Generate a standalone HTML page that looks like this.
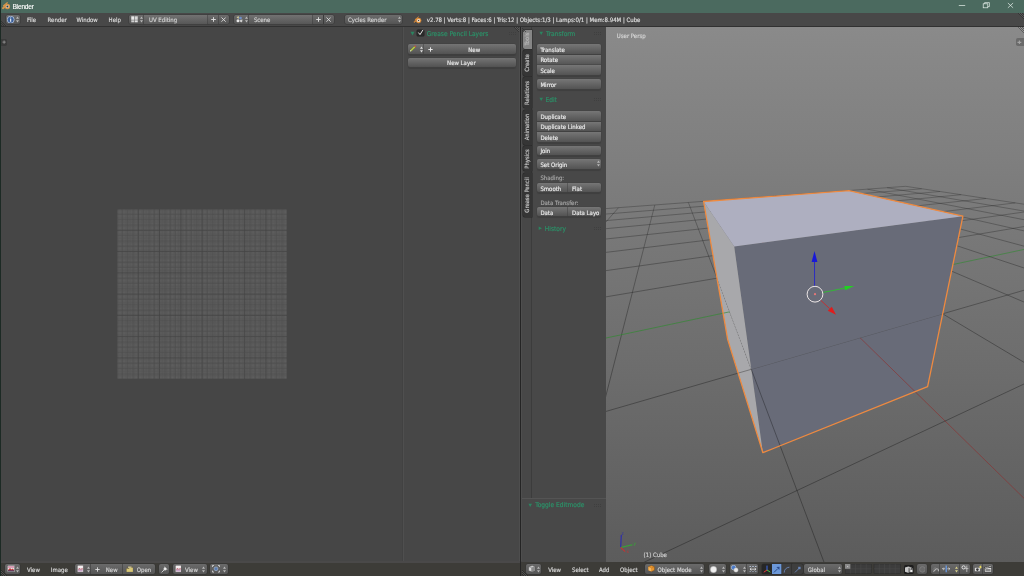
<!DOCTYPE html>
<html><head><meta charset="utf-8"><title>Blender</title>
<style>
html,body{margin:0;padding:0}
body{width:1024px;height:576px;overflow:hidden;position:relative;background:#464646;font-family:"DejaVu Sans Condensed","DejaVu Sans","Liberation Sans",sans-serif;font-stretch:condensed;font-size:6px;color:#d8d8d8;line-height:1;-webkit-text-stroke:0.18px}
.a{position:absolute}
.t{position:absolute;white-space:nowrap;line-height:7px;height:7px}
#title{left:0;top:0;width:1024px;height:13px;background:#4b6a5f}
#info{left:0;top:13px;width:1024px;height:13px;background:#484848}
.hb{position:absolute;top:15px;height:9px;background:linear-gradient(#5e5e5e,#4b4b4b);box-shadow:0 0 0 0.5px #333}
.bb{position:absolute;top:564px;height:9.5px;background:linear-gradient(#5e5e5e,#4b4b4b);box-shadow:0 0 0 0.5px #2e2e2e}
.pb{position:absolute;height:9.5px;background:linear-gradient(#6c6c6c,#515151);box-shadow:0 0 0 0.5px #333,0 1px 1px rgba(0,0,0,.25);color:#e6e6e6}
.pb .t{top:1.4px}
.ph{color:#2a9a6c}
.tab{position:absolute;left:2px;width:9px;background:#343434;border-radius:2px 0 0 2px;box-shadow:0 0 0 0.5px #222}
.tab span{position:absolute;left:50%;top:50%;transform:translate(-50%,-50%) rotate(-90deg);white-space:nowrap;color:#c8c8c8;font-size:5.4px}
</style></head><body><div id="root" style="position:absolute;left:0;top:0;width:1024px;height:576px;will-change:transform">

<!-- window title bar -->
<div id="title" class="a">
 <svg class="a" style="left:1.6px;top:1.8px" width="9" height="8" viewBox="0 0 18 16"><path d="M10.5 1.4 L3 7.4 H6.2 L1.4 11.6 C0.6 12.4 1.6 13.6 2.6 12.9 L5.4 10.8" fill="none" stroke="#d8954a" stroke-width="2.2" stroke-linecap="round" stroke-linejoin="round"/><circle cx="10.8" cy="9" r="5.4" fill="#d8954a"/><circle cx="10.8" cy="9" r="3" fill="#eadfcc"/><circle cx="10.8" cy="9" r="2" fill="#2c3a4c"/></svg>
 <div class="t" style="left:12.4px;top:2.7px;-webkit-text-stroke:0.12px;letter-spacing:-0.18px;font-family:'Liberation Sans',sans-serif;font-stretch:normal;font-size:6.6px;color:#fff">Blender</div>
 <svg class="a" style="left:950px;top:0" width="74" height="13" viewBox="0 0 74 13" fill="none" stroke="#e8f0ec" stroke-width="0.7"><path d="M8.8 5.5H15.2"/><rect x="33.2" y="3.8" width="4.6" height="4"/><path d="M34.6 3.8V2.6H39.4V6.6H37.8"/><path d="M57.9 3L63.1 7.8M63.1 3L57.9 7.8"/></svg>
</div>

<!-- info header -->
<div id="info" class="a"></div>
<div class="a" style="left:0;top:26px;width:1024px;height:1px;background:#313131"></div>

<div class="a" style="left:5.8px;top:14.8px;width:13.8px;height:9px;background:linear-gradient(#6c6c6c,#545454);box-shadow:0 0 0 0.5px #383838;border-radius:2px"></div>
<svg class="a" style="left:7.4px;top:15.6px" width="7.4" height="7.4" viewBox="0 0 7.4 7.4"><circle cx="3.7" cy="3.7" r="3.5" fill="#3a5f9a" stroke="#c8d4e8" stroke-width="0.7"/><rect x="3.2" y="3" width="1" height="2.8" fill="#fff"/><rect x="3.2" y="1.5" width="1" height="1" fill="#fff"/></svg>
<svg class="a" style="left:15.8px;top:15.6px" width="3" height="7" viewBox="0 0 3 7"><path d="M0 2.8L1.5 0.6L3 2.8ZM0 4.2L1.5 6.4L3 4.2Z" fill="#b8b8b8"/></svg>
<div class="t" style="left:27.1px;top:15.6px;color:#d6d6d6">File</div>
<div class="t" style="left:47.6px;top:15.6px;color:#d6d6d6">Render</div>
<div class="t" style="left:76.5px;top:15.6px;color:#d6d6d6">Window</div>
<div class="t" style="left:108.6px;top:15.6px;color:#d6d6d6">Help</div>
<div class="a" style="left:129.4px;top:14.8px;width:15px;height:9px;background:linear-gradient(#6c6c6c,#545454);box-shadow:0 0 0 0.5px #383838;border-radius:2px 0 0 2px"></div>
<svg class="a" style="left:131px;top:16px" width="7" height="6.6" viewBox="0 0 14 13"><rect x="0.5" y="0.5" width="6" height="7" fill="#e8e8e8"/><rect x="7.5" y="0.5" width="6" height="7" fill="#d8d8d8"/><rect x="0.5" y="8.5" width="6" height="4" fill="#cfcfcf"/><rect x="7.5" y="8.5" width="6" height="4" fill="#e0e0e0"/></svg>
<svg class="a" style="left:139.7px;top:15.6px" width="3" height="7" viewBox="0 0 3 7"><path d="M0 2.8L1.5 0.6L3 2.8ZM0 4.2L1.5 6.4L3 4.2Z" fill="#b8b8b8"/></svg>
<div class="a" style="left:144.4px;top:14.8px;width:63.6px;height:9px;background:linear-gradient(#727272,#575757);box-shadow:0 0 0 0.5px #383838;"></div>
<div class="t" style="left:149px;top:15.6px;color:#cfcfcf">UV Editing</div>
<div class="a" style="left:208px;top:14.8px;width:10.6px;height:9px;background:linear-gradient(#6c6c6c,#545454);box-shadow:0 0 0 0.5px #383838;"></div>
<svg class="a" style="left:210.8px;top:16.8px" width="5" height="5" viewBox="0 0 5 5"><path d="M2.5 0.2V4.8M0.2 2.5H4.8" stroke="#dcdcdc" stroke-width="0.95" fill="none"/></svg>
<div class="a" style="left:218.6px;top:14.8px;width:10.8px;height:9px;background:linear-gradient(#6c6c6c,#545454);box-shadow:0 0 0 0.5px #383838;border-radius:0 2px 2px 0"></div>
<svg class="a" style="left:221.3px;top:16.7px" width="5.2" height="5.2" viewBox="0 0 5.2 5.2"><path d="M0.5 0.5L4.7 4.7M4.7 0.5L0.5 4.7" stroke="#dcdcdc" stroke-width="0.9" fill="none"/></svg>
<div class="a" style="left:234.3px;top:14.8px;width:15px;height:9px;background:linear-gradient(#6c6c6c,#545454);box-shadow:0 0 0 0.5px #383838;border-radius:2px 0 0 2px"></div>
<svg class="a" style="left:235.9px;top:16px" width="7" height="6.6" viewBox="0 0 14 13"><circle cx="4" cy="9.5" r="3" fill="#e8e8e8"/><circle cx="9" cy="4" r="2.8" fill="#6f8fc8"/><path d="M1 2L6 0.5L5 6Z" fill="#d8d0a0"/><path d="M8 8L13 7L12 12.5L8.5 12Z" fill="#cfcfcf"/></svg>
<svg class="a" style="left:244.6px;top:15.6px" width="3" height="7" viewBox="0 0 3 7"><path d="M0 2.8L1.5 0.6L3 2.8ZM0 4.2L1.5 6.4L3 4.2Z" fill="#b8b8b8"/></svg>
<div class="a" style="left:249.3px;top:14.8px;width:63.6px;height:9px;background:linear-gradient(#727272,#575757);box-shadow:0 0 0 0.5px #383838;"></div>
<div class="t" style="left:253.9px;top:15.6px;color:#cfcfcf">Scene</div>
<div class="a" style="left:312.9px;top:14.8px;width:10.6px;height:9px;background:linear-gradient(#6c6c6c,#545454);box-shadow:0 0 0 0.5px #383838;"></div>
<svg class="a" style="left:315.7px;top:16.8px" width="5" height="5" viewBox="0 0 5 5"><path d="M2.5 0.2V4.8M0.2 2.5H4.8" stroke="#dcdcdc" stroke-width="0.95" fill="none"/></svg>
<div class="a" style="left:323.5px;top:14.8px;width:10.8px;height:9px;background:linear-gradient(#6c6c6c,#545454);box-shadow:0 0 0 0.5px #383838;border-radius:0 2px 2px 0"></div>
<svg class="a" style="left:326.2px;top:16.7px" width="5.2" height="5.2" viewBox="0 0 5.2 5.2"><path d="M0.5 0.5L4.7 4.7M4.7 0.5L0.5 4.7" stroke="#dcdcdc" stroke-width="0.9" fill="none"/></svg>
<div class="a" style="left:345px;top:14.8px;width:57.2px;height:9px;background:linear-gradient(#6c6c6c,#545454);box-shadow:0 0 0 0.5px #383838;border-radius:2px"></div>
<div class="t" style="left:348px;top:15.6px;color:#cfcfcf">Cycles Render</div>
<svg class="a" style="left:398.1px;top:15.6px" width="3" height="7" viewBox="0 0 3 7"><path d="M0 2.8L1.5 0.6L3 2.8ZM0 4.2L1.5 6.4L3 4.2Z" fill="#b8b8b8"/></svg>
<svg class="a" style="left:412.6px;top:15.6px" width="9.4" height="8" viewBox="0 0 19 16"><path d="M11 1.6L4 7.2H6.8L2 11.4C1.2 12.2 2.2 13.2 3 12.6L5.6 10.6" fill="none" stroke="#e8923a" stroke-width="1.5" stroke-linecap="round" stroke-linejoin="round"/><circle cx="11.3" cy="9" r="4.9" fill="#e8923a" stroke="#e8923a" stroke-width="1.2"/><circle cx="11.3" cy="9" r="3.1" fill="#f6f0e6"/><circle cx="11.3" cy="9" r="1.5" fill="#4a4238"/></svg>
<div class="t" style="left:426.8px;top:15.6px;color:#dcdcdc">v2.78 | Verts:8 | Faces:6 | Tris:12 | Objects:1/3 | Lamps:0/1 | Mem:8.94M | Cube</div>
<svg class="a" style="left:1017px;top:13px" width="7" height="7" viewBox="0 0 7 7"><path d="M1 0L7 6M3 0L7 4M5 0L7 2" stroke="#2e2e2e" stroke-width="0.7" fill="none"/><path d="M2 0L7 5M4 0L7 3" stroke="#666" stroke-width="0.5" fill="none"/></svg>
<svg class="a" style="left:1px;top:20px" width="6" height="6" viewBox="0 0 6 6"><path d="M0 1L5 6M0 3L3 6M0 5L1 6" stroke="#2e2e2e" stroke-width="0.7" fill="none"/></svg>

<!-- UV editor -->
<div id="uv" class="a" style="left:0;top:27px;width:403px;height:536px;background:#464646"></div>
<svg class="a" style="left:116.8px;top:208.6px" width="170.2" height="170.2" viewBox="0 0 170.2 170.2"><defs><pattern id="fine" width="1.3297" height="1.3297" patternUnits="userSpaceOnUse"><rect width="1.3297" height="1.3297" fill="#5e5e5e"/><path d="M0 0.22H1.3297M0.22 0V1.3297" stroke="#535353" stroke-width="0.45"/></pattern></defs><rect x="0" y="0" width="170.2" height="170.2" fill="url(#fine)"/><path d="M0 0V170.2M0 0H170.2" stroke="#434343" stroke-width="0.7" fill="none"/><path d="M5.32 0V170.2M0 5.32H170.2" stroke="#4c4c4c" stroke-width="0.5" fill="none"/><path d="M10.64 0V170.2M0 10.64H170.2" stroke="#4c4c4c" stroke-width="0.5" fill="none"/><path d="M15.96 0V170.2M0 15.96H170.2" stroke="#4c4c4c" stroke-width="0.5" fill="none"/><path d="M21.27 0V170.2M0 21.27H170.2" stroke="#434343" stroke-width="0.7" fill="none"/><path d="M26.59 0V170.2M0 26.59H170.2" stroke="#4c4c4c" stroke-width="0.5" fill="none"/><path d="M31.91 0V170.2M0 31.91H170.2" stroke="#4c4c4c" stroke-width="0.5" fill="none"/><path d="M37.23 0V170.2M0 37.23H170.2" stroke="#4c4c4c" stroke-width="0.5" fill="none"/><path d="M42.55 0V170.2M0 42.55H170.2" stroke="#434343" stroke-width="0.7" fill="none"/><path d="M47.87 0V170.2M0 47.87H170.2" stroke="#4c4c4c" stroke-width="0.5" fill="none"/><path d="M53.19 0V170.2M0 53.19H170.2" stroke="#4c4c4c" stroke-width="0.5" fill="none"/><path d="M58.51 0V170.2M0 58.51H170.2" stroke="#4c4c4c" stroke-width="0.5" fill="none"/><path d="M63.82 0V170.2M0 63.82H170.2" stroke="#434343" stroke-width="0.7" fill="none"/><path d="M69.14 0V170.2M0 69.14H170.2" stroke="#4c4c4c" stroke-width="0.5" fill="none"/><path d="M74.46 0V170.2M0 74.46H170.2" stroke="#4c4c4c" stroke-width="0.5" fill="none"/><path d="M79.78 0V170.2M0 79.78H170.2" stroke="#4c4c4c" stroke-width="0.5" fill="none"/><path d="M85.1 0V170.2M0 85.1H170.2" stroke="#434343" stroke-width="0.7" fill="none"/><path d="M90.42 0V170.2M0 90.42H170.2" stroke="#4c4c4c" stroke-width="0.5" fill="none"/><path d="M95.74 0V170.2M0 95.74H170.2" stroke="#4c4c4c" stroke-width="0.5" fill="none"/><path d="M101.06 0V170.2M0 101.06H170.2" stroke="#4c4c4c" stroke-width="0.5" fill="none"/><path d="M106.38 0V170.2M0 106.38H170.2" stroke="#434343" stroke-width="0.7" fill="none"/><path d="M111.69 0V170.2M0 111.69H170.2" stroke="#4c4c4c" stroke-width="0.5" fill="none"/><path d="M117.01 0V170.2M0 117.01H170.2" stroke="#4c4c4c" stroke-width="0.5" fill="none"/><path d="M122.33 0V170.2M0 122.33H170.2" stroke="#4c4c4c" stroke-width="0.5" fill="none"/><path d="M127.65 0V170.2M0 127.65H170.2" stroke="#434343" stroke-width="0.7" fill="none"/><path d="M132.97 0V170.2M0 132.97H170.2" stroke="#4c4c4c" stroke-width="0.5" fill="none"/><path d="M138.29 0V170.2M0 138.29H170.2" stroke="#4c4c4c" stroke-width="0.5" fill="none"/><path d="M143.61 0V170.2M0 143.61H170.2" stroke="#4c4c4c" stroke-width="0.5" fill="none"/><path d="M148.92 0V170.2M0 148.92H170.2" stroke="#434343" stroke-width="0.7" fill="none"/><path d="M154.24 0V170.2M0 154.24H170.2" stroke="#4c4c4c" stroke-width="0.5" fill="none"/><path d="M159.56 0V170.2M0 159.56H170.2" stroke="#4c4c4c" stroke-width="0.5" fill="none"/><path d="M164.88 0V170.2M0 164.88H170.2" stroke="#4c4c4c" stroke-width="0.5" fill="none"/><path d="M170.2 0V170.2M0 170.2H170.2" stroke="#434343" stroke-width="0.7" fill="none"/></svg>
<div class="a" style="left:1px;top:38.6px;width:5.8px;height:7px;background:#3a3a3a;border-radius:0 1.8px 1.8px 0"></div>
<svg class="a" style="left:1.6px;top:40px" width="4.2" height="4.2" viewBox="0 0 4.2 4.2"><path d="M2.1 0.5V3.7M0.5 2.1H3.7" stroke="#8c8c8c" stroke-width="1"/></svg>
<div class="a" style="left:402.4px;top:27px;width:0.6px;height:536px;background:#424242"></div><div class="a" style="left:403px;top:27px;width:1px;height:536px;background:#4f4f4f"></div>
<div id="gp" class="a" style="left:404px;top:27px;width:116px;height:536px;background:#474747"></div>
<svg class="a" style="left:409.6px;top:31px" width="5" height="5" viewBox="0 0 5 5"><path d="M0.5 0.8H4.5L2.5 4.4Z" fill="#2a8560"/></svg>
<div class="a" style="left:417.3px;top:29.7px;width:6.4px;height:6.4px;background:#292929;border-radius:1px;box-shadow:0 0 0 0.5px #222"></div>
<svg class="a" style="left:417.3px;top:29.2px" width="7" height="7" viewBox="0 0 7 7"><path d="M1.6 3.8L3 5.6L5.8 1.2" stroke="#e2e2e2" stroke-width="1" fill="none" stroke-linecap="round" stroke-linejoin="round"/></svg>
<div class="t" style="left:426.7px;top:30.9px;color:#2c9068;font-size:6.6px">Grease Pencil Layers</div>
<svg class="a" style="left:508.6px;top:31.8px" width="7.5" height="3" viewBox="0 0 7.5 3"><g fill="#3f3f3f"><rect x="0" y="0" width="1" height="1"/><rect x="2" y="0" width="1" height="1"/><rect x="4" y="0" width="1" height="1"/><rect x="6" y="0" width="1" height="1"/><rect x="0" y="2" width="1" height="1"/><rect x="2" y="2" width="1" height="1"/><rect x="4" y="2" width="1" height="1"/><rect x="6" y="2" width="1" height="1"/></g></svg>
<svg class="a" style="left:513px;top:27px" width="7" height="7" viewBox="0 0 7 7"><path d="M1 0L7 6M3 0L7 4M5 0L7 2" stroke="#2e2e2e" stroke-width="0.7" fill="none"/><path d="M2 0L7 5M4 0L7 3" stroke="#6a6a6a" stroke-width="0.5" fill="none"/></svg>
<div class="a" style="left:407.8px;top:44.4px;width:16.6px;height:9.8px;background:linear-gradient(#747474,#525252);box-shadow:0 0 0 0.5px #414141,0 1.2px 1px rgba(0,0,0,.13);border-radius:2px 0 0 2px"></div>
<svg class="a" style="left:409.4px;top:45.4px" width="7.5" height="7.5" viewBox="0 0 8 8"><path d="M1 6.8L1.6 5L5.6 1L7 2.4L3 6.4Z" fill="#b4cc48" stroke="#5a5a2a" stroke-width="0.4"/><path d="M1 6.8L1.5 5.2L2.7 6.3Z" fill="#f4f4f4"/><path d="M5.6 1L6.4 0.3L7.6 1.6L7 2.4Z" fill="#d84444"/></svg>
<svg class="a" style="left:419.7px;top:45.8px" width="3" height="7" viewBox="0 0 3 7"><path d="M0 2.8L1.5 0.6L3 2.8ZM0 4.2L1.5 6.4L3 4.2Z" fill="#dedede"/></svg>
<div class="a" style="left:424.4px;top:44.4px;width:91.2px;height:9.8px;background:linear-gradient(#747474,#525252);box-shadow:0 0 0 0.5px #414141,0 1.2px 1px rgba(0,0,0,.13);border-radius:0 2px 2px 0"></div>
<svg class="a" style="left:428.2px;top:46.8px" width="5" height="5" viewBox="0 0 5 5"><path d="M2.5 0.3V4.7M0.3 2.5H4.7" stroke="#ececec" stroke-width="0.95" fill="none"/></svg>
<div class="t" style="left:424.2px;width:100px;text-align:center;top:45.9px;color:#e6e6e6">New</div>
<div class="a" style="left:407.8px;top:57.8px;width:107.8px;height:9.4px;background:linear-gradient(#747474,#525252);box-shadow:0 0 0 0.5px #414141,0 1.2px 1px rgba(0,0,0,.13);border-radius:2px"></div>
<div class="t" style="left:411.4px;width:100px;text-align:center;top:59.1px;color:#e6e6e6">New Layer</div>

<!-- tool shelf -->
<div class="a" style="left:521px;top:27px;width:11px;height:471px;background:#474747"></div>
<div class="a" style="left:531px;top:27px;width:1px;height:471px;background:#3c3c3c"></div>
<div class="a" style="left:532px;top:27px;width:74px;height:471px;background:#484848"></div>
<div class="a" style="left:521px;top:498px;width:85px;height:65px;background:#484848;border-top:1px solid #545454;box-sizing:border-box"></div>
<div class="a" style="left:522.6px;top:30px;width:9.4px;height:18.8px;background:#868686;box-shadow:0 0 0 0.5px #2a2a2a;border-radius:2px 0 0 2px"><span style="position:absolute;left:50%;top:50%;transform:translate(-50%,-50%) rotate(-90deg);white-space:nowrap;color:#b8b8b8;font-size:5.8px;line-height:7px">Tools</span></div>
<div class="a" style="left:522.6px;top:50.4px;width:9.4px;height:25.2px;background:#353535;box-shadow:0 0 0 0.5px #262626;border-radius:2px 0 0 2px"><span style="position:absolute;left:50%;top:50%;transform:translate(-50%,-50%) rotate(-90deg);white-space:nowrap;color:#c4c4c4;font-size:5.8px;line-height:7px">Create</span></div>
<div class="a" style="left:522.6px;top:77.2px;width:9.4px;height:31.2px;background:#353535;box-shadow:0 0 0 0.5px #262626;border-radius:2px 0 0 2px"><span style="position:absolute;left:50%;top:50%;transform:translate(-50%,-50%) rotate(-90deg);white-space:nowrap;color:#c4c4c4;font-size:5.8px;line-height:7px">Relations</span></div>
<div class="a" style="left:522.6px;top:110px;width:9.4px;height:34.6px;background:#353535;box-shadow:0 0 0 0.5px #262626;border-radius:2px 0 0 2px"><span style="position:absolute;left:50%;top:50%;transform:translate(-50%,-50%) rotate(-90deg);white-space:nowrap;color:#c4c4c4;font-size:5.8px;line-height:7px">Animation</span></div>
<div class="a" style="left:522.6px;top:146px;width:9.4px;height:25.2px;background:#353535;box-shadow:0 0 0 0.5px #262626;border-radius:2px 0 0 2px"><span style="position:absolute;left:50%;top:50%;transform:translate(-50%,-50%) rotate(-90deg);white-space:nowrap;color:#c4c4c4;font-size:5.8px;line-height:7px">Physics</span></div>
<div class="a" style="left:522.6px;top:173px;width:9.4px;height:43.8px;background:#353535;box-shadow:0 0 0 0.5px #262626;border-radius:2px 0 0 2px"><span style="position:absolute;left:50%;top:50%;transform:translate(-50%,-50%) rotate(-90deg);white-space:nowrap;color:#c4c4c4;font-size:5.8px;line-height:7px">Grease Pencil</span></div>
<svg class="a" style="left:538.8px;top:31.2px" width="4.4" height="4.4" viewBox="0 0 4.4 4.4"><path d="M0.4 0.7H4L2.2 4Z" fill="#2a8560"/></svg>
<div class="t" style="left:546px;top:30.9px;color:#2c9068;font-size:6.6px">Transform</div>
<svg class="a" style="left:594.4px;top:31.8px" width="7.5" height="3" viewBox="0 0 7.5 3"><g fill="#3f3f3f"><rect x="0" y="0" width="1" height="1"/><rect x="2" y="0" width="1" height="1"/><rect x="4" y="0" width="1" height="1"/><rect x="6" y="0" width="1" height="1"/><rect x="0" y="2" width="1" height="1"/><rect x="2" y="2" width="1" height="1"/><rect x="4" y="2" width="1" height="1"/><rect x="6" y="2" width="1" height="1"/></g></svg>
<div class="a" style="left:536.8px;top:44.3px;width:64.5px;height:10px;background:linear-gradient(#767676,#535353);box-shadow:0 0 0 0.5px #424242,0 1.2px 1px rgba(0,0,0,.13);border-radius:2px 2px 0 0"></div><div class="t" style="left:540.4px;top:46px;color:#e8e8e8">Translate</div>
<div class="a" style="left:536.8px;top:54.8px;width:64.5px;height:9.9px;background:linear-gradient(#767676,#535353);box-shadow:0 0 0 0.5px #424242,0 1.2px 1px rgba(0,0,0,.13);border-radius:0"></div><div class="t" style="left:540.4px;top:56.45px;color:#e8e8e8">Rotate</div>
<div class="a" style="left:536.8px;top:65.2px;width:64.5px;height:10.1px;background:linear-gradient(#767676,#535353);box-shadow:0 0 0 0.5px #424242,0 1.2px 1px rgba(0,0,0,.13);border-radius:0 0 2px 2px"></div><div class="t" style="left:540.4px;top:66.95px;color:#e8e8e8">Scale</div>
<div class="a" style="left:536.8px;top:79.2px;width:64.5px;height:9.4px;background:linear-gradient(#767676,#535353);box-shadow:0 0 0 0.5px #424242,0 1.2px 1px rgba(0,0,0,.13);border-radius:2px"></div><div class="t" style="left:540.4px;top:80.6px;color:#e8e8e8">Mirror</div>
<svg class="a" style="left:538.8px;top:97.4px" width="4.4" height="4.4" viewBox="0 0 4.4 4.4"><path d="M0.4 0.7H4L2.2 4Z" fill="#2a8560"/></svg>
<div class="t" style="left:545.4px;top:97.1px;color:#2c9068;font-size:6.6px">Edit</div>
<svg class="a" style="left:594.4px;top:98px" width="7.5" height="3" viewBox="0 0 7.5 3"><g fill="#3f3f3f"><rect x="0" y="0" width="1" height="1"/><rect x="2" y="0" width="1" height="1"/><rect x="4" y="0" width="1" height="1"/><rect x="6" y="0" width="1" height="1"/><rect x="0" y="2" width="1" height="1"/><rect x="2" y="2" width="1" height="1"/><rect x="4" y="2" width="1" height="1"/><rect x="6" y="2" width="1" height="1"/></g></svg>
<div class="a" style="left:536.8px;top:111.2px;width:64.5px;height:9.9px;background:linear-gradient(#767676,#535353);box-shadow:0 0 0 0.5px #424242,0 1.2px 1px rgba(0,0,0,.13);border-radius:2px 2px 0 0"></div><div class="t" style="left:540.4px;top:112.85px;color:#e8e8e8">Duplicate</div>
<div class="a" style="left:536.8px;top:121.6px;width:64.5px;height:9.9px;background:linear-gradient(#767676,#535353);box-shadow:0 0 0 0.5px #424242,0 1.2px 1px rgba(0,0,0,.13);border-radius:0"></div><div class="t" style="left:540.4px;top:123.25px;color:#e8e8e8">Duplicate Linked</div>
<div class="a" style="left:536.8px;top:132px;width:64.5px;height:10.4px;background:linear-gradient(#767676,#535353);box-shadow:0 0 0 0.5px #424242,0 1.2px 1px rgba(0,0,0,.13);border-radius:0 0 2px 2px"></div><div class="t" style="left:540.4px;top:133.9px;color:#e8e8e8">Delete</div>
<div class="a" style="left:536.8px;top:145.8px;width:64.5px;height:9.4px;background:linear-gradient(#767676,#535353);box-shadow:0 0 0 0.5px #424242,0 1.2px 1px rgba(0,0,0,.13);border-radius:2px"></div><div class="t" style="left:540.4px;top:147.2px;color:#e8e8e8">Join</div>
<div class="a" style="left:536.8px;top:159px;width:64.5px;height:9.6px;background:linear-gradient(#767676,#535353);box-shadow:0 0 0 0.5px #424242,0 1.2px 1px rgba(0,0,0,.13);border-radius:2px"></div><div class="t" style="left:540.4px;top:160.5px;color:#e8e8e8">Set Origin</div>
<svg class="a" style="left:596.7px;top:160.3px" width="3" height="7" viewBox="0 0 3 7"><path d="M0 2.8L1.5 0.6L3 2.8ZM0 4.2L1.5 6.4L3 4.2Z" fill="#b8b8b8"/></svg>
<div class="t" style="left:540.4px;top:174.3px;color:#a4a4a4">Shading:</div>
<div class="a" style="left:536.8px;top:183.2px;width:31.2px;height:9.2px;background:linear-gradient(#767676,#535353);box-shadow:0 0 0 0.5px #424242,0 1.2px 1px rgba(0,0,0,.13);border-radius:2px 0 0 2px"></div><div class="t" style="left:540.4px;top:184.5px;color:#e8e8e8">Smooth</div>
<div class="a" style="left:568.4px;top:183.2px;width:32.9px;height:9.2px;background:linear-gradient(#767676,#535353);box-shadow:0 0 0 0.5px #424242,0 1.2px 1px rgba(0,0,0,.13);border-radius:0 2px 2px 0"></div><div class="t" style="left:572px;top:184.5px;color:#e8e8e8">Flat</div>
<div class="t" style="left:540.4px;top:198.5px;color:#a4a4a4">Data Transfer:</div>
<div class="a" style="left:536.8px;top:207.2px;width:31.2px;height:9.2px;background:linear-gradient(#767676,#535353);box-shadow:0 0 0 0.5px #424242,0 1.2px 1px rgba(0,0,0,.13);border-radius:2px 0 0 2px"></div><div class="t" style="left:540.4px;top:208.5px;color:#e8e8e8">Data</div>
<div class="a" style="left:568.4px;top:207.2px;width:32.9px;height:9.2px;background:linear-gradient(#767676,#535353);box-shadow:0 0 0 0.5px #424242,0 1.2px 1px rgba(0,0,0,.13);border-radius:0 2px 2px 0"></div><div class="t" style="left:572px;top:208.5px;color:#e8e8e8">Data Layo</div>
<svg class="a" style="left:538.4px;top:225.8px" width="4.4" height="4.4" viewBox="0 0 4.4 4.4"><path d="M0.7 0.4V4L4 2.2Z" fill="#2a8560"/></svg>
<div class="t" style="left:544.8px;top:225.5px;color:#2c9068;font-size:6.6px">History</div>
<svg class="a" style="left:594.4px;top:226.6px" width="7.5" height="3" viewBox="0 0 7.5 3"><g fill="#3f3f3f"><rect x="0" y="0" width="1" height="1"/><rect x="2" y="0" width="1" height="1"/><rect x="4" y="0" width="1" height="1"/><rect x="6" y="0" width="1" height="1"/><rect x="0" y="2" width="1" height="1"/><rect x="2" y="2" width="1" height="1"/><rect x="4" y="2" width="1" height="1"/><rect x="6" y="2" width="1" height="1"/></g></svg>
<svg class="a" style="left:528.4px;top:502.6px" width="4.4" height="4.4" viewBox="0 0 4.4 4.4"><path d="M0.4 0.7H4L2.2 4Z" fill="#2a8560"/></svg>
<div class="t" style="left:535.2px;top:502.3px;color:#2c9068;font-size:6.6px">Toggle Editmode</div>
<svg class="a" style="left:594.2px;top:503.6px" width="7.5" height="3" viewBox="0 0 7.5 3"><g fill="#3f3f3f"><rect x="0" y="0" width="1" height="1"/><rect x="2" y="0" width="1" height="1"/><rect x="4" y="0" width="1" height="1"/><rect x="6" y="0" width="1" height="1"/><rect x="0" y="2" width="1" height="1"/><rect x="2" y="2" width="1" height="1"/><rect x="4" y="2" width="1" height="1"/><rect x="6" y="2" width="1" height="1"/></g></svg>
<svg class="a" style="left:521px;top:27px" width="7" height="7" viewBox="0 0 7 7"><path d="M0 1L5 6M0 3L3 6" stroke="#2a2a2a" stroke-width="0.6" fill="none" transform="translate(0,-1) scale(1,1)"/></svg>

<svg id="v3d" width="418" height="536" viewBox="0 0 418 536" style="position:absolute;left:606px;top:27px">
<defs><linearGradient id="bg" x1="0" y1="0" x2="0" y2="1"><stop offset="0" stop-color="#8a8a8a"/><stop offset="1" stop-color="#5c5c5c"/></linearGradient><linearGradient id="fade" gradientUnits="userSpaceOnUse" x1="0" y1="150" x2="0" y2="330"><stop offset="0" stop-color="#fff" stop-opacity="0.7"/><stop offset="0.45" stop-color="#fff" stop-opacity="0.88"/><stop offset="1" stop-color="#fff" stop-opacity="1"/></linearGradient><mask id="gm" maskUnits="userSpaceOnUse" x="0" y="0" width="418" height="536"><rect width="418" height="536" fill="url(#fade)"/></mask></defs>
<rect width="418" height="536" fill="url(#bg)"/>
<polygon points="145.3,342.3 336.7,286.8 321.6,359.7 156.9,425.7" fill="#686b78" />
<polygon points="111.0,251.2 145.3,342.3 156.9,425.7 121.7,312.6" fill="#a8a8ab" />
<g stroke-opacity="0.5" mask="url(#gm)"><line x1="-224.8" y1="198.3" x2="299.7" y2="159.3" stroke="#000" stroke-width="0.62" />
<line x1="-224.8" y1="198.3" x2="-5067.4" y2="1458.2" stroke="#000" stroke-width="0.62" />
<line x1="-262.2" y1="208.0" x2="315.7" y2="161.8" stroke="#000" stroke-width="0.62" />
<line x1="-168.1" y1="194.1" x2="-4266.6" y2="1447.5" stroke="#000" stroke-width="0.62" />
<line x1="-310.8" y1="220.7" x2="334.0" y2="164.5" stroke="#000" stroke-width="0.62" />
<line x1="-116.7" y1="190.3" x2="-3465.9" y2="1436.8" stroke="#000" stroke-width="0.62" />
<line x1="-376.4" y1="237.7" x2="355.2" y2="167.7" stroke="#000" stroke-width="0.62" />
<line x1="-69.8" y1="186.8" x2="-2665.2" y2="1426.1" stroke="#000" stroke-width="0.62" />
<line x1="-470.0" y1="262.1" x2="379.9" y2="171.5" stroke="#000" stroke-width="0.62" />
<line x1="-26.9" y1="183.6" x2="-1864.5" y2="1415.4" stroke="#000" stroke-width="0.62" />
<line x1="-614.2" y1="299.6" x2="409.3" y2="175.9" stroke="#000" stroke-width="0.62" />
<line x1="12.5" y1="180.7" x2="-1063.8" y2="1404.7" stroke="#000" stroke-width="0.62" />
<line x1="-865.6" y1="365.0" x2="444.6" y2="181.3" stroke="#000" stroke-width="0.62" />
<line x1="48.8" y1="178.0" x2="-263.0" y2="1394.0" stroke="#000" stroke-width="0.62" />
<line x1="-1413.7" y1="507.6" x2="487.9" y2="187.8" stroke="#000" stroke-width="0.62" />
<line x1="82.4" y1="175.5" x2="111.0" y2="251.2" stroke="#000" stroke-width="0.62" />
<line x1="111.0" y1="251.2" x2="145.3" y2="342.3" stroke="#000" stroke-width="0.62" stroke-dasharray="1.6 1.4" stroke-opacity="0.5"/>
<line x1="145.3" y1="342.3" x2="537.7" y2="1383.3" stroke="#000" stroke-width="0.62" />
<line x1="-3542.7" y1="1061.6" x2="542.4" y2="196.1" stroke="#2f8a2f" stroke-width="0.72" stroke-opacity="0.95"/>
<line x1="113.6" y1="173.2" x2="1338.4" y2="1372.6" stroke="#8a3434" stroke-width="0.72" stroke-opacity="0.95"/>
<line x1="-3637.6" y1="1439.1" x2="145.3" y2="342.3" stroke="#000" stroke-width="0.62" />
<line x1="145.3" y1="342.3" x2="336.7" y2="286.8" stroke="#000" stroke-width="0.62" stroke-opacity="0.28"/>
<line x1="336.7" y1="286.8" x2="612.8" y2="206.8" stroke="#000" stroke-width="0.62" />
<line x1="142.5" y1="171.0" x2="2139.1" y2="1361.9" stroke="#000" stroke-width="0.62" />
<line x1="-1836.6" y1="1415.0" x2="707.6" y2="221.1" stroke="#000" stroke-width="0.62" />
<line x1="169.5" y1="169.0" x2="2939.8" y2="1351.2" stroke="#000" stroke-width="0.62" />
<line x1="-35.6" y1="1391.0" x2="841.7" y2="241.4" stroke="#000" stroke-width="0.62" />
<line x1="194.8" y1="167.1" x2="3740.6" y2="1340.5" stroke="#000" stroke-width="0.62" />
<line x1="1765.4" y1="1366.9" x2="1046.3" y2="272.4" stroke="#000" stroke-width="0.62" />
<line x1="218.4" y1="165.4" x2="4541.3" y2="1329.8" stroke="#000" stroke-width="0.62" />
<line x1="3566.3" y1="1342.8" x2="1396.6" y2="325.5" stroke="#000" stroke-width="0.62" />
<line x1="240.6" y1="163.7" x2="5342.0" y2="1319.1" stroke="#000" stroke-width="0.62" />
<line x1="5367.3" y1="1318.7" x2="2134.6" y2="437.3" stroke="#000" stroke-width="0.62" />
<line x1="261.5" y1="162.2" x2="6142.7" y2="1308.4" stroke="#000" stroke-width="0.62" />
<line x1="7168.3" y1="1294.7" x2="4701.4" y2="826.1" stroke="#000" stroke-width="0.62" />
<line x1="281.1" y1="160.7" x2="6943.4" y2="1297.7" stroke="#000" stroke-width="0.62" />

<line x1="299.7" y1="159.3" x2="7744.2" y2="1287.0" stroke="#000" stroke-width="0.62" /></g>
<polygon points="128.2,219.5 356.9,189.2 336.7,286.8 145.3,342.3" fill="#686b78" />
<polygon points="97.6,174.5 128.2,219.5 145.3,342.3 111.0,251.2" fill="#a8a8ab" />
<polygon points="128.2,219.5 356.9,189.2 242.9,163.7 97.6,174.5" fill="#aeafc0" />
<polygon points="97.6,174.5 242.9,163.7 356.9,189.2 321.6,359.7 156.9,425.7 121.7,312.6" fill="none" stroke="#ee8a40" stroke-width="1.3" stroke-linejoin="round"/>
<line x1="208.6" y1="259.2" x2="208.5" y2="234.9" stroke="#1818d8" stroke-width="0.75"/><polygon points="211.4,234.9 205.6,234.9 208.5,224.0" fill="#1818d8"/>
<line x1="217.4" y1="265.4" x2="238.7" y2="261.1" stroke="#22d022" stroke-width="0.75"/><polygon points="239.2,263.3 238.2,258.9 248.2,259.1" fill="#22d022"/>
<line x1="214.6" y1="273.2" x2="223.8" y2="281.7" stroke="#e01c1c" stroke-width="0.75"/><polygon points="221.8,283.7 225.8,279.7 230.0,287.8" fill="#e01c1c"/>
<circle cx="209.0" cy="267.2" r="7.9" fill="none" stroke="#ece6e6" stroke-width="1"/>
<circle cx="209.0" cy="267.2" r="1.1" fill="#e87878"/>
</svg>
<div class="t" style="left:616.8px;top:32.1px;color:#d4d4d4">User Persp</div>
<div class="t" style="left:643.6px;top:550.5px;color:#cecece">(1) Cube</div>
<svg class="a" style="left:612px;top:528px" width="30" height="30" viewBox="0 0 30 30"><path d="M8.7 19.5L9.3 7" stroke="#2a2ab0" stroke-width="1.1"/><path d="M8.7 19.5L20.5 16.8" stroke="#34a834" stroke-width="1.1"/><path d="M8.7 19.5L13.2 23.6" stroke="#c03434" stroke-width="1.1"/><text x="9.6" y="6.6" font-size="4.6" fill="#2a2ab0">z</text><text x="21.6" y="17" font-size="4.6" fill="#34a834">y</text><text x="14.6" y="25.4" font-size="4.6" fill="#c03434">x</text></svg>
<div class="a" style="left:1016.2px;top:38.2px;width:7.8px;height:7.6px;background:#6a6a6a;border-radius:1.8px 0 0 1.8px"></div>
<svg class="a" style="left:1017.4px;top:39.6px" width="4.8" height="4.8" viewBox="0 0 4.8 4.8"><path d="M2.4 0.5V4.3M0.5 2.4H4.3" stroke="#a4a4a4" stroke-width="1.1"/></svg>
<svg class="a" style="left:1017px;top:27px" width="7" height="7" viewBox="0 0 7 7"><path d="M1 0L7 6M3 0L7 4M5 0L7 2" stroke="#4a4a4a" stroke-width="0.7" fill="none"/><path d="M2 0L7 5M4 0L7 3" stroke="#9a9a9a" stroke-width="0.5" fill="none"/></svg>

<!-- bottom headers -->
<div class="a" style="left:0;top:560.6px;width:520px;height:2.2px;background:#4a4949"></div><div class="a" style="left:0;top:562.7px;width:520px;height:13.3px;background:#3d3c38"></div>
<div class="a" style="left:521px;top:562.2px;width:503px;height:13.8px;background:#3d3c38"></div>
<div class="a" style="left:5px;top:564.4px;width:15px;height:9.2px;background:linear-gradient(#6a6a6a,#555);box-shadow:0 0 0 0.5px #343434;border-radius:2px"></div>
<svg class="a" style="left:6.8px;top:565.4px" width="8" height="7" viewBox="0 0 8 7"><rect x="0.3" y="0.3" width="7.4" height="6.4" fill="#e8e4e4" stroke="#444" stroke-width="0.4"/><rect x="1" y="1" width="6" height="2" fill="#d8a0b8"/><path d="M1 5L3 3L4.5 4.4L5.6 3.6L7 5V6H1Z" fill="#c03838"/><rect x="1" y="5.4" width="6" height="0.8" fill="#3a3a6a"/></svg>
<svg class="a" style="left:15.9px;top:565.8px" width="3" height="7" viewBox="0 0 3 7"><path d="M0 2.8L1.5 0.6L3 2.8ZM0 4.2L1.5 6.4L3 4.2Z" fill="#b8b8b8"/></svg>
<div class="t" style="left:27px;top:565.8px;color:#d6d6d6">View</div>
<div class="t" style="left:50.8px;top:565.8px;color:#d6d6d6">Image</div>
<div class="a" style="left:75px;top:564.4px;width:16px;height:9.2px;background:linear-gradient(#6a6a6a,#555);box-shadow:0 0 0 0.5px #343434;border-radius:2px 0 0 2px"></div>
<svg class="a" style="left:77.4px;top:565.2px" width="6.6" height="7.4" viewBox="0 0 6.6 7.4"><rect x="0.3" y="0.3" width="6" height="6.8" fill="#e4dede" stroke="#555" stroke-width="0.4"/><rect x="1" y="0.9" width="4.6" height="2.4" fill="#f4eef0"/><path d="M1 4.2L2.4 3.2L3.6 4L5.6 3.2V4.6H1Z" fill="#b03040"/><rect x="1" y="4.6" width="4.6" height="1.8" fill="#c8a4c8"/></svg>
<svg class="a" style="left:86.7px;top:565.8px" width="3" height="7" viewBox="0 0 3 7"><path d="M0 2.8L1.5 0.6L3 2.8ZM0 4.2L1.5 6.4L3 4.2Z" fill="#b8b8b8"/></svg>
<div class="a" style="left:91px;top:564.4px;width:32.2px;height:9.2px;background:linear-gradient(#6a6a6a,#555);box-shadow:0 0 0 0.5px #343434;"></div>
<svg class="a" style="left:95px;top:566.6px" width="5" height="5" viewBox="0 0 5 5"><path d="M2.5 0.3V4.7M0.3 2.5H4.7" stroke="#e0e0e0" stroke-width="0.9" fill="none"/></svg>
<div class="t" style="left:105.8px;top:565.8px;color:#d0d0d0">New</div>
<div class="a" style="left:123.2px;top:564.4px;width:32px;height:9.2px;background:linear-gradient(#6a6a6a,#555);box-shadow:0 0 0 0.5px #343434;border-radius:0 2px 2px 0"></div>
<svg class="a" style="left:125.8px;top:565.6px" width="7.6" height="6.6" viewBox="0 0 7.6 6.6"><path d="M0.4 2.4H3L3.8 1.4H7.2V6.2H0.4Z" fill="#d8c878" stroke="#6a5a2a" stroke-width="0.4"/><path d="M2 1.8V0.4H5.6V1.4" fill="#f0e8c0" stroke="#6a5a2a" stroke-width="0.3"/></svg>
<div class="t" style="left:136.8px;top:565.8px;color:#d0d0d0">Open</div>
<div class="a" style="left:159px;top:564.4px;width:10px;height:9.2px;background:linear-gradient(#6a6a6a,#555);box-shadow:0 0 0 0.5px #343434;border-radius:2px"></div>
<svg class="a" style="left:160.6px;top:565.6px" width="7" height="7" viewBox="0 0 7 7"><path d="M0.6 6.4L3 4" stroke="#e8e8e8" stroke-width="0.8"/><path d="M2.2 3L4 4.8L5 3.8L6.6 3.4L3.6 0.4L3.2 2Z" fill="#f0f0f0" stroke="#888" stroke-width="0.3"/></svg>
<div class="a" style="left:172.6px;top:564.4px;width:34.4px;height:9.2px;background:linear-gradient(#6a6a6a,#555);box-shadow:0 0 0 0.5px #343434;border-radius:2px"></div>
<svg class="a" style="left:174.6px;top:565.2px" width="6.6" height="7.4" viewBox="0 0 6.6 7.4"><rect x="0.3" y="0.3" width="6" height="6.8" fill="#e4dede" stroke="#555" stroke-width="0.4"/><rect x="1" y="0.9" width="4.6" height="2.4" fill="#f4eef0"/><path d="M1 4.2L2.4 3.2L3.6 4L5.6 3.2V4.6H1Z" fill="#b03040"/><rect x="1" y="4.6" width="4.6" height="1.8" fill="#c8a4c8"/></svg>
<div class="t" style="left:185px;top:565.8px;color:#d0d0d0">View</div>
<svg class="a" style="left:202.3px;top:565.8px" width="3" height="7" viewBox="0 0 3 7"><path d="M0 2.8L1.5 0.6L3 2.8ZM0 4.2L1.5 6.4L3 4.2Z" fill="#b8b8b8"/></svg>
<div class="a" style="left:210.2px;top:564.4px;width:17.4px;height:9.2px;background:linear-gradient(#6a6a6a,#555);box-shadow:0 0 0 0.5px #343434;border-radius:2px"></div>
<svg class="a" style="left:212px;top:565.2px" width="8" height="7.6" viewBox="0 0 8 7.6"><path d="M0.5 2V0.5H2M6 0.5H7.5V2M7.5 5.6V7.1H6M2 7.1H0.5V5.6" stroke="#e0e0e0" stroke-width="0.8" fill="none"/><circle cx="4" cy="3.8" r="1.9" fill="#5a7cb0" stroke="#b8c8e0" stroke-width="0.5"/></svg>
<svg class="a" style="left:223.3px;top:565.8px" width="3" height="7" viewBox="0 0 3 7"><path d="M0 2.8L1.5 0.6L3 2.8ZM0 4.2L1.5 6.4L3 4.2Z" fill="#b8b8b8"/></svg>
<svg class="a" style="left:1px;top:569px" width="7" height="7" viewBox="0 0 7 7"><path d="M0 1L6 7M0 3L4 7M0 5L2 7" stroke="#262626" stroke-width="0.7" fill="none"/><path d="M0 2L5 7M0 4L3 7" stroke="#666" stroke-width="0.5" fill="none"/></svg>
<div class="a" style="left:526.4px;top:564.4px;width:14.6px;height:9.2px;background:linear-gradient(#6a6a6a,#555);box-shadow:0 0 0 0.5px #343434;border-radius:2px"></div>
<svg class="a" style="left:528.2px;top:565.4px" width="7.6" height="7.4" viewBox="0 0 7.6 7.6"><path d="M0.5 1.8L4.4 0.6L7 1.6V5.8L3.6 7L0.5 5.8Z" fill="#d8d8d8" stroke="#3a3a3a" stroke-width="0.4"/><path d="M0.5 1.8L3.6 2.8L7 1.6M3.6 2.8V7" stroke="#555" stroke-width="0.4" fill="none"/><path d="M3.6 2.8L7 1.6V5.8L3.6 7Z" fill="#8a8a8a"/></svg>
<svg class="a" style="left:536.9px;top:565.8px" width="3" height="7" viewBox="0 0 3 7"><path d="M0 2.8L1.5 0.6L3 2.8ZM0 4.2L1.5 6.4L3 4.2Z" fill="#b8b8b8"/></svg>
<div class="t" style="left:548.2px;top:565.8px;color:#d6d6d6">View</div>
<div class="t" style="left:572px;top:565.8px;color:#d6d6d6">Select</div>
<div class="t" style="left:599px;top:565.8px;color:#d6d6d6">Add</div>
<div class="t" style="left:620px;top:565.8px;color:#d6d6d6">Object</div>
<div class="a" style="left:645.4px;top:564.4px;width:58.8px;height:9.2px;background:linear-gradient(#6a6a6a,#555);box-shadow:0 0 0 0.5px #343434;border-radius:2px"></div>
<svg class="a" style="left:648.2px;top:565.4px" width="6.8" height="7" viewBox="0 0 6.8 7"><path d="M0.4 1.8L3.4 0.4L6.4 1.8V5.2L3.4 6.6L0.4 5.2Z" fill="#e8962e" stroke="#7a4a10" stroke-width="0.4"/><path d="M0.4 1.8L3.4 3.2L6.4 1.8M3.4 3.2V6.6" stroke="#a85e14" stroke-width="0.4" fill="none"/><path d="M0.4 1.8L3.4 3.2V6.6L0.4 5.2Z" fill="#f4b45a"/></svg>
<div class="t" style="left:657.6px;top:565.8px;color:#d6d6d6">Object Mode</div>
<svg class="a" style="left:700.1px;top:565.8px" width="3" height="7" viewBox="0 0 3 7"><path d="M0 2.8L1.5 0.6L3 2.8ZM0 4.2L1.5 6.4L3 4.2Z" fill="#b8b8b8"/></svg>
<div class="a" style="left:708.6px;top:564.4px;width:17.2px;height:9.2px;background:linear-gradient(#6a6a6a,#555);box-shadow:0 0 0 0.5px #343434;border-radius:2px"></div>
<svg class="a" style="left:710.4px;top:565.6px" width="7" height="7" viewBox="0 0 7 7"><circle cx="3.5" cy="3.5" r="3.2" fill="#f0f0f0" stroke="#999" stroke-width="0.4"/></svg>
<svg class="a" style="left:721.7px;top:565.8px" width="3" height="7" viewBox="0 0 3 7"><path d="M0 2.8L1.5 0.6L3 2.8ZM0 4.2L1.5 6.4L3 4.2Z" fill="#b8b8b8"/></svg>
<div class="a" style="left:729.8px;top:564.4px;width:17.4px;height:9.2px;background:linear-gradient(#6a6a6a,#555);box-shadow:0 0 0 0.5px #343434;border-radius:2px 0 0 2px"></div>
<svg class="a" style="left:731.4px;top:565.2px" width="7.6" height="7.6" viewBox="0 0 7.6 7.6"><circle cx="2.6" cy="2.6" r="2.3" fill="#4a7ac8" stroke="#dfe8f4" stroke-width="0.5"/><circle cx="5" cy="5" r="2.3" fill="#e8e8e8" stroke="#888" stroke-width="0.4"/></svg>
<svg class="a" style="left:743.1px;top:565.8px" width="3" height="7" viewBox="0 0 3 7"><path d="M0 2.8L1.5 0.6L3 2.8ZM0 4.2L1.5 6.4L3 4.2Z" fill="#b8b8b8"/></svg>
<div class="a" style="left:747.2px;top:564.4px;width:10.6px;height:9.2px;background:linear-gradient(#6a6a6a,#555);box-shadow:0 0 0 0.5px #343434;border-radius:0 2px 2px 0"></div>
<svg class="a" style="left:748.6px;top:566px" width="8" height="6.4" viewBox="0 0 8 6.4"><path d="M0.5 0.5H2M3.2 0.5H4.8M6 0.5H7.5M0.5 5.9H2M3.2 5.9H4.8M6 5.9H7.5" stroke="#c8d8f0" stroke-width="0.8"/><path d="M1 3.2H7M1 3.2L2.4 2M1 3.2L2.4 4.4M7 3.2L5.6 2M7 3.2L5.6 4.4" stroke="#f0f0f0" stroke-width="0.7" fill="none"/></svg>
<div class="a" style="left:761.8px;top:564.4px;width:10px;height:9.2px;background:#262626;box-shadow:0 0 0 0.6px #2c2c2c;border-radius:2px 0 0 2px"></div>
<svg class="a" style="left:762.8px;top:565px" width="8" height="8" viewBox="0 0 8 8"><path d="M4 5V0.6" stroke="#3a6ae8" stroke-width="1"/><path d="M4 5L0.8 7.2" stroke="#e03a3a" stroke-width="1"/><path d="M4 5L7.4 7.2" stroke="#4ac84a" stroke-width="1"/></svg>
<div class="a" style="left:771.8px;top:564.4px;width:10.2px;height:9.2px;background:#6c98d8;box-shadow:0 0 0 0.6px #2c2c2c"></div>
<svg class="a" style="left:773.2px;top:565.6px" width="7.4" height="7.4" viewBox="0 0 7.4 7.4"><path d="M1 6.4L4.6 2.8" stroke="#2a4a8a" stroke-width="1"/><path d="M3.4 1L6.6 0.8L6.4 4Z" fill="#2a4a8a"/></svg>
<div class="a" style="left:782px;top:564.4px;width:10.2px;height:9.2px;background:#3e3e3e;box-shadow:0 0 0 0.6px #2c2c2c"></div>
<svg class="a" style="left:783.4px;top:565.6px" width="7.4" height="7.4" viewBox="0 0 7.4 7.4"><path d="M1.2 6.6C1.2 3.6 3.2 1.4 6.4 1.2" stroke="#6a86b8" stroke-width="0.9" fill="none"/></svg>
<div class="a" style="left:792.2px;top:564.4px;width:10.8px;height:9.2px;background:#3e3e3e;box-shadow:0 0 0 0.6px #2c2c2c;border-radius:0 2px 2px 0"></div>
<svg class="a" style="left:794px;top:565.6px" width="7.4" height="7.4" viewBox="0 0 7.4 7.4"><path d="M1 6.4L4.8 2.6" stroke="#6a86b8" stroke-width="0.9"/><rect x="4.2" y="0.8" width="2.4" height="2.4" fill="#6a86b8"/></svg>
<div class="a" style="left:804px;top:564.4px;width:37.8px;height:9.2px;background:linear-gradient(#6a6a6a,#555);box-shadow:0 0 0 0.5px #343434;border-radius:2px"></div>
<div class="t" style="left:807.8px;top:565.8px;color:#d6d6d6">Global</div>
<svg class="a" style="left:837.5px;top:565.8px" width="3" height="7" viewBox="0 0 3 7"><path d="M0 2.8L1.5 0.6L3 2.8ZM0 4.2L1.5 6.4L3 4.2Z" fill="#b8b8b8"/></svg>
<svg class="a" style="left:845px;top:564.2px" width="56" height="9.8" viewBox="0 0 56 9.8"><rect x="0" y="0" width="26.5" height="9.6" fill="#3c3c3c" stroke="#2a2a2a" stroke-width="0.5"/><path d="M5.3 0V9.6" stroke="#4c4c4c" stroke-width="0.5"/><path d="M10.6 0V9.6" stroke="#4c4c4c" stroke-width="0.5"/><path d="M15.9 0V9.6" stroke="#4c4c4c" stroke-width="0.5"/><path d="M21.2 0V9.6" stroke="#4c4c4c" stroke-width="0.5"/><path d="M0 4.8H26.5" stroke="#4c4c4c" stroke-width="0.5"/><rect x="29" y="0" width="26.5" height="9.6" fill="#3c3c3c" stroke="#2a2a2a" stroke-width="0.5"/><path d="M34.3 0V9.6" stroke="#4c4c4c" stroke-width="0.5"/><path d="M39.6 0V9.6" stroke="#4c4c4c" stroke-width="0.5"/><path d="M44.9 0V9.6" stroke="#4c4c4c" stroke-width="0.5"/><path d="M50.2 0V9.6" stroke="#4c4c4c" stroke-width="0.5"/><path d="M29 4.8H55.5" stroke="#4c4c4c" stroke-width="0.5"/><rect x="0" y="0" width="5.3" height="4.8" fill="#8c8c8c"/><circle cx="2.65" cy="2.4" r="1" fill="#c8c8c8" stroke="#555" stroke-width="0.3"/></svg>
<svg class="a" style="left:904px;top:564.6px" width="9.6" height="9" viewBox="0 0 9.6 9"><rect x="0" y="0" width="9.6" height="9" rx="1.5" fill="#1e1e1e"/><path d="M1 2.4L4.4 1.4L7 2.2V6.6L4 7.8L1 6.8Z" fill="#c8c8c8"/><path d="M4.2 3L7 2.2V6.6L4.2 7.8Z" fill="#8a8a8a"/><rect x="6" y="4.6" width="2.8" height="2.6" fill="#e8e8e8" stroke="#333" stroke-width="0.3"/><path d="M6.6 4.6V3.6A0.8 0.8 0 0 1 8.2 3.6V4.6" stroke="#e8e8e8" stroke-width="0.5" fill="none"/></svg>
<div class="a" style="left:917px;top:564.4px;width:10px;height:9.2px;background:linear-gradient(#6a6a6a,#555);box-shadow:0 0 0 0.5px #343434;border-radius:2px"></div>
<svg class="a" style="left:918.6px;top:565.8px" width="6.8" height="6.8" viewBox="0 0 6.8 6.8"><circle cx="3.4" cy="3.4" r="2.8" fill="#6a6a6a" stroke="#848484" stroke-width="0.7"/></svg>
<div class="a" style="left:930.8px;top:564.4px;width:9.6px;height:9.2px;background:linear-gradient(#6a6a6a,#555);box-shadow:0 0 0 0.5px #343434;border-radius:2px 0 0 2px"></div>
<svg class="a" style="left:932.2px;top:565.6px" width="7" height="7" viewBox="0 0 7 7"><path d="M1.4 5.6L4 3A1.6 1.6 0 0 1 6.2 5.2" stroke="#b0b0b0" stroke-width="1.1" fill="none"/><path d="M1 3.6L3.4 1.2" stroke="#888" stroke-width="0.8"/></svg>
<div class="a" style="left:940.4px;top:564.4px;width:19.4px;height:9.2px;background:linear-gradient(#6a6a6a,#555);box-shadow:0 0 0 0.5px #343434;"></div>
<svg class="a" style="left:942px;top:565.4px" width="8.4" height="7.6" viewBox="0 0 8.4 7.6"><path d="M4.2 0.4V7.2" stroke="#6aa0f0" stroke-width="1.2"/><path d="M0.6 3.8H3M5.4 3.8H7.8M0.6 3.8L1.8 2.6M0.6 3.8L1.8 5M7.8 3.8L6.6 2.6M7.8 3.8L6.6 5" stroke="#e8e8e8" stroke-width="0.7" fill="none"/></svg>
<svg class="a" style="left:954.5px;top:565.8px" width="3" height="7" viewBox="0 0 3 7"><path d="M0 2.8L1.5 0.6L3 2.8ZM0 4.2L1.5 6.4L3 4.2Z" fill="#d8d08a"/></svg>
<div class="a" style="left:959.8px;top:564.4px;width:10px;height:9.2px;background:linear-gradient(#6a6a6a,#555);box-shadow:0 0 0 0.5px #343434;border-radius:0 2px 2px 0"></div>
<svg class="a" style="left:961px;top:565.4px" width="8" height="7.6" viewBox="0 0 8 7.6"><circle cx="2.6" cy="2.4" r="1.6" fill="none" stroke="#f0f0f0" stroke-width="0.9"/><path d="M5.8 0.6V7M4.2 3.6H7.4" stroke="#d8d8d8" stroke-width="0.7"/></svg>
<div class="a" style="left:973px;top:564.4px;width:10px;height:9.2px;background:linear-gradient(#6a6a6a,#555);box-shadow:0 0 0 0.5px #343434;border-radius:2px 0 0 2px"></div>
<svg class="a" style="left:974px;top:565.2px" width="8.4" height="7.8" viewBox="0 0 8.4 7.8"><rect x="0.6" y="2.6" width="5.6" height="4" rx="0.6" fill="#e8e8e8" stroke="#333" stroke-width="0.4"/><circle cx="3.4" cy="4.6" r="1.3" fill="#333"/><path d="M6.4 0.2L7 1.6L8.4 2L7 2.6L6.4 4L5.8 2.6L4.6 2L5.8 1.6Z" fill="#f0e060"/></svg>
<div class="a" style="left:983px;top:564.4px;width:10.2px;height:9.2px;background:linear-gradient(#6a6a6a,#555);box-shadow:0 0 0 0.5px #343434;border-radius:0 2px 2px 0"></div>
<svg class="a" style="left:984.2px;top:565.4px" width="8" height="7.6" viewBox="0 0 8 7.6"><rect x="0.6" y="2.6" width="6.8" height="4.4" fill="#e8e8e8" stroke="#222" stroke-width="0.4"/><path d="M0.6 2.4L7.2 0.6L7.6 1.8L1 3.6Z" fill="#d8d8d8" stroke="#222" stroke-width="0.4"/><path d="M1.4 4.4H6.6M1.4 5.6H6.6" stroke="#333" stroke-width="0.6"/><path d="M2.4 2.2L3.4 3M4.4 1.6L5.4 2.4" stroke="#222" stroke-width="0.5"/></svg>
<svg class="a" style="left:522px;top:569px" width="7" height="7" viewBox="0 0 7 7"><path d="M0 1L6 7M0 3L4 7M0 5L2 7" stroke="#262626" stroke-width="0.7" fill="none"/><path d="M0 2L5 7M0 4L3 7" stroke="#666" stroke-width="0.5" fill="none"/></svg>
<div class="a" style="left:519.2px;top:27px;width:2.6px;height:533.6px;background:#4e4e4e"></div><div class="a" style="left:519.9px;top:27px;width:1.2px;height:549px;background:#242424"></div>
<div class="a" style="left:0;top:0;width:1px;height:576px;background:#1c2a24"></div>
</div></body></html>
